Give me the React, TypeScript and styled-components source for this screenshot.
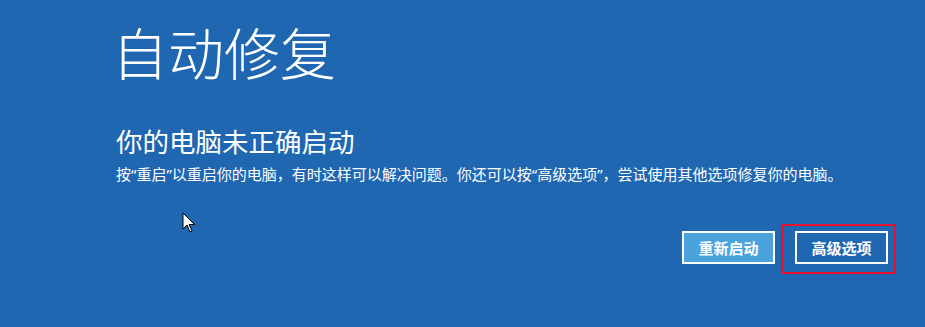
import * as React from "react";
import styled, { createGlobalStyle } from "styled-components";

const GlobalStyle = createGlobalStyle`
    html, body {
        margin: 0;
        background-color: #2067b2;
    }
    body {
        font-family: "Microsoft YaHei", "Noto Sans CJK SC", sans-serif;
        color: #ffffff;
    }
`;

const App: React.FC = () => {
    return (
        <>
            <GlobalStyle />
            <Screen>
                <Title>自动修复</Title>
                <Heading>你的电脑未正确启动</Heading>
                <Desc>
                    按“重启”以重启你的电脑，有时这样可以解决问题。你还可以按“高级选项”，尝试使用其他选项修复你的电脑。
                </Desc>
                <Actions>
                    <Button $primary>重新启动</Button>
                    <Highlight>
                        <Button>高级选项</Button>
                    </Highlight>
                </Actions>
                <Cursor />
            </Screen>
        </>
    );
};

export default App;

const Screen = styled.main`
    position: relative;
    display: flex;
    flex-direction: column;
    width: 925px;
    height: 327px;
    box-sizing: border-box;
    padding: 16px 29px 0 116px;
    overflow: hidden;
`;

const Title = styled.h1`
    margin: 0 0 0 -4px;
    font-size: 56px;
    font-weight: 300;
    line-height: 70px;
`;

const Heading = styled.h2`
    margin: 38px 0 0;
    font-size: 26.5px;
    font-weight: 400;
    line-height: 34px;
`;

/* latin font first so the curly quotes come out narrow, as in the original */
const Desc = styled.p`
    margin: 5px 0 0;
    font-family: "Noto Sans", "Noto Sans CJK SC", sans-serif;
    font-size: 15px;
    line-height: 22px;
`;

const Actions = styled.div`
    display: flex;
    justify-content: flex-end;
    align-items: flex-start;
    gap: 6px;
    margin-top: 39px;
`;

const Button = styled.button<{ $primary?: boolean }>`
    width: 93px;
    height: 33px;
    margin-top: ${(p) => (p.$primary ? "7px" : "0")};
    box-sizing: border-box;
    border: 2px solid #ffffff;
    background-color: ${(p) => (p.$primary ? "#4aa3dd" : "#2067b2")};
    color: #ffffff;
    font-family: inherit;
    font-size: 15px;
    font-weight: 700;
    padding: 0;
`;

const Highlight = styled.div`
    border: 2px solid #e8112d;
    padding: 5px 6px 8px 12px;
`;

const CursorSvg = styled.svg`
    position: absolute;
    left: 182px;
    top: 212px;
`;

const Cursor: React.FC = () => (
    <CursorSvg width="14" height="22" viewBox="0 0 14 22">
        <path
            d="M1 1 L1 17 L5 13 L8 20 L10 19 L7 12.5 L12.5 12.5 Z"
            fill="#ffffff"
            stroke="#000000"
            strokeWidth="1"
            strokeLinejoin="miter"
        />
    </CursorSvg>
);
